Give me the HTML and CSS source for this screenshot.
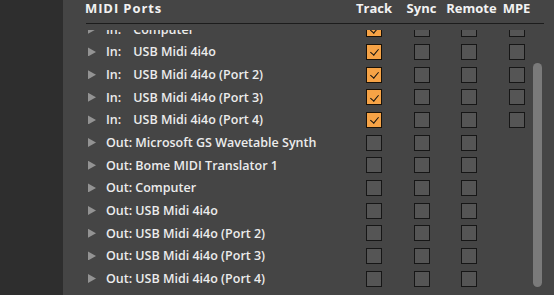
FILE: index.html
```html
<!DOCTYPE html>
<html>
<head>
<meta charset="utf-8">
<link rel="stylesheet" href="styles.css">
</head>
<body>
<div class="app">
  <aside class="side"></aside>
  <main class="main">
    <div class="head">
      <div class="h-name">MIDI Ports</div>
      <div class="h-col">Track</div>
      <div class="h-col">Sync</div>
      <div class="h-col">Remote</div>
      <div class="h-col">MPE</div>
    </div>
    <div class="view">
      <div class="list">
        <div class="row in"><span class="tri"></span><span class="lab">In:</span><span class="nm">Computer</span><span class="c"><i class="cb on"></i></span><span class="c"><i class="cb"></i></span><span class="c"><i class="cb"></i></span><span class="c"><i class="cb"></i></span></div>
        <div class="row in"><span class="tri"></span><span class="lab">In:</span><span class="nm">USB Midi 4i4o</span><span class="c"><i class="cb on"></i></span><span class="c"><i class="cb"></i></span><span class="c"><i class="cb"></i></span><span class="c"><i class="cb"></i></span></div>
        <div class="row in"><span class="tri"></span><span class="lab">In:</span><span class="nm">USB Midi 4i4o (Port 2)</span><span class="c"><i class="cb on"></i></span><span class="c"><i class="cb"></i></span><span class="c"><i class="cb"></i></span><span class="c"><i class="cb"></i></span></div>
        <div class="row in"><span class="tri"></span><span class="lab">In:</span><span class="nm">USB Midi 4i4o (Port 3)</span><span class="c"><i class="cb on"></i></span><span class="c"><i class="cb"></i></span><span class="c"><i class="cb"></i></span><span class="c"><i class="cb"></i></span></div>
        <div class="row in"><span class="tri"></span><span class="lab">In:</span><span class="nm">USB Midi 4i4o (Port 4)</span><span class="c"><i class="cb on"></i></span><span class="c"><i class="cb"></i></span><span class="c"><i class="cb"></i></span><span class="c"><i class="cb"></i></span></div>
        <div class="row out"><span class="tri"></span><span class="lab">Out:</span><span class="nm">Microsoft GS Wavetable Synth</span><span class="c"><i class="cb"></i></span><span class="c"><i class="cb"></i></span><span class="c"><i class="cb"></i></span><span class="c"></span></div>
        <div class="row out"><span class="tri"></span><span class="lab">Out:</span><span class="nm">Bome MIDI Translator 1</span><span class="c"><i class="cb"></i></span><span class="c"><i class="cb"></i></span><span class="c"><i class="cb"></i></span><span class="c"></span></div>
        <div class="row out"><span class="tri"></span><span class="lab">Out:</span><span class="nm">Computer</span><span class="c"><i class="cb"></i></span><span class="c"><i class="cb"></i></span><span class="c"><i class="cb"></i></span><span class="c"></span></div>
        <div class="row out"><span class="tri"></span><span class="lab">Out:</span><span class="nm">USB Midi 4i4o</span><span class="c"><i class="cb"></i></span><span class="c"><i class="cb"></i></span><span class="c"><i class="cb"></i></span><span class="c"></span></div>
        <div class="row out"><span class="tri"></span><span class="lab">Out:</span><span class="nm">USB Midi 4i4o (Port 2)</span><span class="c"><i class="cb"></i></span><span class="c"><i class="cb"></i></span><span class="c"><i class="cb"></i></span><span class="c"></span></div>
        <div class="row out"><span class="tri"></span><span class="lab">Out:</span><span class="nm">USB Midi 4i4o (Port 3)</span><span class="c"><i class="cb"></i></span><span class="c"><i class="cb"></i></span><span class="c"><i class="cb"></i></span><span class="c"></span></div>
        <div class="row out"><span class="tri"></span><span class="lab">Out:</span><span class="nm">USB Midi 4i4o (Port 4)</span><span class="c"><i class="cb"></i></span><span class="c"><i class="cb"></i></span><span class="c"><i class="cb"></i></span><span class="c"></span></div>
      </div>
      <div class="scroll"></div>
    </div>
  </main>
</div>
</body>
</html>
```

FILE: styles.css
```css
* { box-sizing: border-box; }
html, body { margin: 0; padding: 0; }
body {
  width: 554px;
  height: 295px;
  overflow: hidden;
  background: #454545;
  font-family: "Open Sans", "Lato", sans-serif;
  color: #e8e8e8;
}
.app { display: flex; height: 295px; }
.side { width: 63px; flex: none; background: #2e2e2e; }
.main { flex: 1; padding-left: 22px; display: flex; flex-direction: column; }

.head {
  display: flex;
  align-items: flex-start;
  flex: none;
  height: 24px;
  width: 458px;
  border-bottom: 1px solid #1c1c1c;
  margin-left: 1px;
  font-weight: 700;
  font-size: 13px;
  line-height: 16px;
  color: #f2f2f2;
  padding-top: 0;
}
.h-name { width: 264.25px; margin-left: -1px; letter-spacing: 0.9px; }
.h-col { width: 47.5px; text-align: center; padding-left: 2px; white-space: nowrap; }

.view { position: relative; flex: 1; min-height: 0; overflow: hidden; margin-top: 6px; }
.list { margin-top: -12px; }
.row {
  display: flex;
  align-items: center;
  height: 22.667px;
  width: 455.25px;
  padding-left: 3px;
  font-size: 12.5px;
  font-weight: 600;
  color: #ececec;
}
.tri {
  width: 8px; height: 9px; flex: none;
  background: #939393;
  clip-path: polygon(0 0, 100% 50%, 0 100%);
  margin-right: 10px;
}
.lab { flex: none; }
.in .lab { width: 27.3px; }
.out .lab { width: 29.3px; }
.nm { flex: 1; min-width: 0; white-space: nowrap; }
.c { width: 47.5px; flex: none; display: flex; justify-content: center; }
.cb {
  display: block;
  width: 16px; height: 16px;
  background: #555555;
  border: 1px solid #161616;
  position: relative;
}
.cb.on { background: #f6a346; border-color: #1a1208; }
.cb.on::after {
  content: "";
  position: absolute;
  left: 4.5px; top: 2.5px;
  width: 4px; height: 7px;
  border-right: 1.3px solid #111;
  border-bottom: 1.3px solid #111;
  transform: rotate(40deg);
}
.scroll {
  position: absolute;
  left: 448.3px;
  top: 33.3px;
  width: 9px;
  height: 224px;
  border-radius: 5px;
  background: #7a7a7a;
}
```
